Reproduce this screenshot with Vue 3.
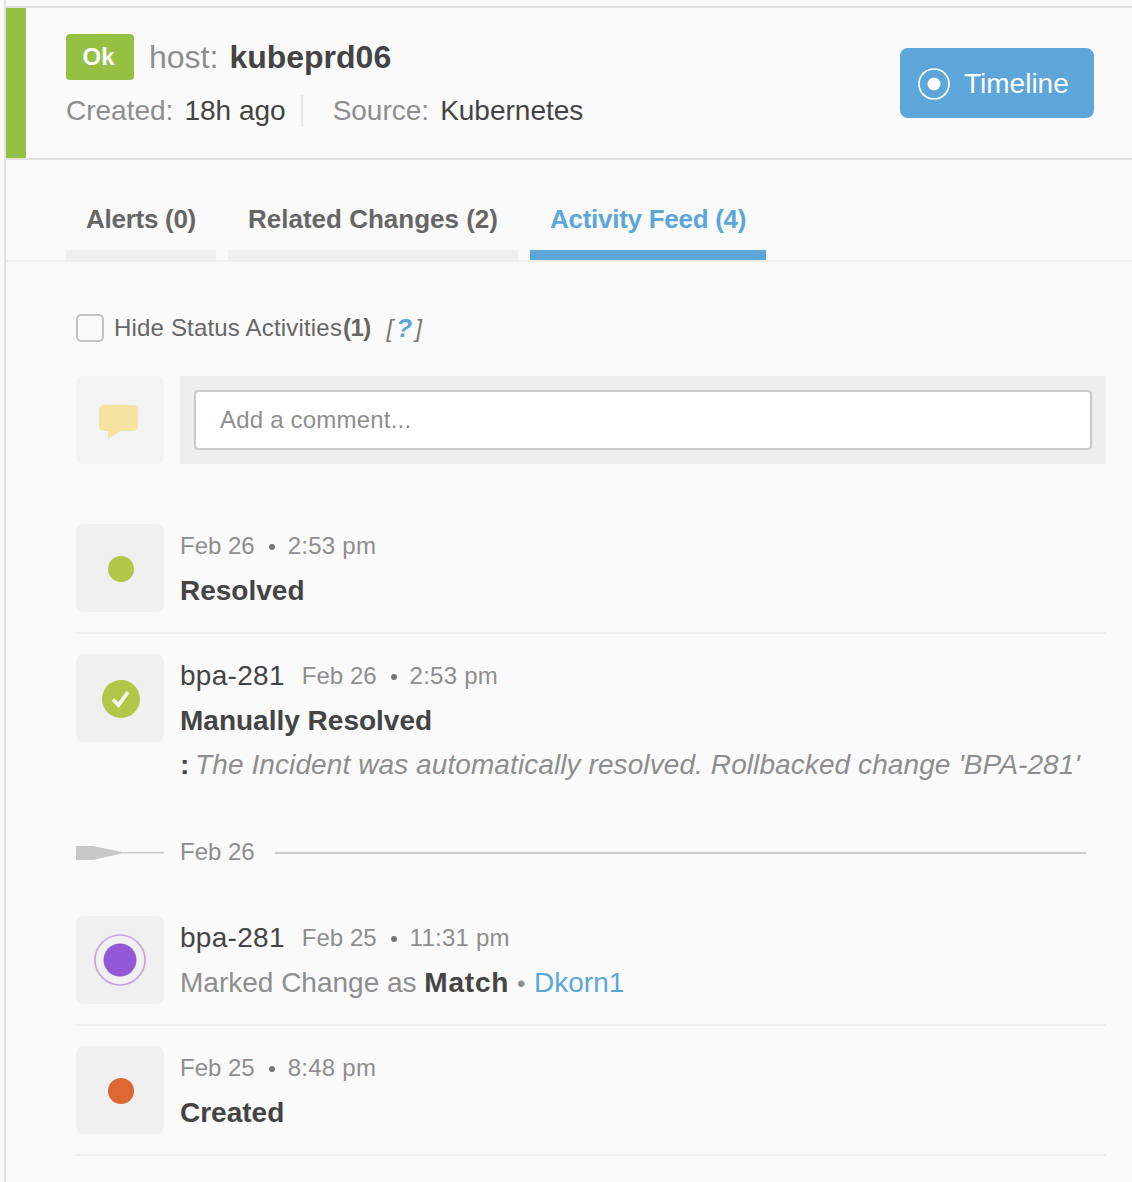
<script setup>
const tabs = [
  { label: 'Alerts (0)', active: false, cls: 'tight' },
  { label: 'Related Changes (2)', active: false, cls: '' },
  { label: 'Activity Feed (4)', active: true, cls: 'tight' }
]
</script>

<template>
  <div class="page">
    <header class="head">
      <div class="bar"></div>
      <div class="head-main">
        <div class="title-row">
          <span class="badge">Ok</span>
          <span class="host">host:</span>
          <strong class="hostname">kubeprd06</strong>
        </div>
        <div class="info-row">
          <span class="muted">Created:</span>
          <span class="val">18h ago</span>
          <span class="vsep"></span>
          <span class="muted">Source:</span>
          <span class="val">Kubernetes</span>
        </div>
      </div>
      <button class="timeline">
        <svg width="32" height="32" viewBox="0 0 32 32"><circle cx="16" cy="16" r="15" fill="none" stroke="#fff" stroke-width="1.7"/><circle cx="16" cy="16" r="6.5" fill="#fff"/></svg>
        <span>Timeline</span>
      </button>
    </header>

    <nav class="tabs">
      <div v-for="t in tabs" :key="t.label" class="tab" :class="[t.cls, { active: t.active }]">{{ t.label }}</div>
    </nav>

    <main class="feed">
      <label class="hide">
        <span class="check"></span>
        <span class="hide-text">Hide Status Activities</span><b class="count">(1)</b>
        <span class="help">[<b>?</b>]</span>
      </label>

      <div class="comment">
        <div class="ibox">
          <svg width="88" height="88" viewBox="0 0 88 88"><path d="M28 29h29a5 5 0 0 1 5 5v16a5 5 0 0 1-5 5H45L32 63V55H28a5 5 0 0 1-5-5V34a5 5 0 0 1 5-5z" fill="#f6e3a1"/></svg>
        </div>
        <div class="comment-area">
          <div class="input">Add a comment...</div>
        </div>
      </div>

      <section class="row first">
        <div class="ibox">
          <svg width="88" height="88" viewBox="0 0 88 88"><circle cx="45" cy="45" r="13" fill="#b2c647"/></svg>
        </div>
        <div class="body">
          <div class="meta"><span>Feb 26</span><i class="dot"></i><span class="time">2:53 pm</span></div>
          <div class="strong">Resolved</div>
        </div>
      </section>

      <section class="row last">
        <div class="ibox">
          <svg width="88" height="88" viewBox="0 0 88 88"><circle cx="45" cy="45" r="19" fill="#b2c647"/><path d="M37 45.5l5.5 5.5 9.5-13" fill="none" stroke="#f4f4f4" stroke-width="3.8"/></svg>
        </div>
        <div class="body">
          <div class="meta"><span class="user">bpa-281</span><span>Feb 26</span><i class="dot"></i><span class="time">2:53 pm</span></div>
          <div class="strong">Manually Resolved</div>
          <div class="note"><b>:</b> <em>The Incident was automatically resolved. Rollbacked change 'BPA-281'</em></div>
        </div>
      </section>

      <div class="date-sep">
        <svg width="88" height="18" viewBox="0 0 88 18"><path d="M0 2h17L46 8H88V9.5H46L17 16H0z" fill="#c8c8c8"/></svg>
        <span class="date-text">Feb 26</span>
        <div class="date-line"></div>
      </div>

      <section class="row">
        <div class="ibox">
          <svg width="88" height="88" viewBox="0 0 88 88"><circle cx="44" cy="44" r="25" fill="none" stroke="#c3a3ea" stroke-width="1.6"/><circle cx="44" cy="44" r="16.5" fill="#9159d8"/></svg>
        </div>
        <div class="body">
          <div class="meta"><span class="user">bpa-281</span><span>Feb 25</span><i class="dot"></i><span class="time">11:31 pm</span></div>
          <div class="line"><span class="soft">Marked Change as </span><b class="match">Match</b><span class="soft bullet"> • </span><a class="link">Dkorn1</a></div>
        </div>
      </section>

      <section class="row">
        <div class="ibox">
          <svg width="88" height="88" viewBox="0 0 88 88"><circle cx="45" cy="45" r="13" fill="#dd6633"/></svg>
        </div>
        <div class="body">
          <div class="meta"><span>Feb 25</span><i class="dot"></i><span class="time">8:48 pm</span></div>
          <div class="strong">Created</div>
        </div>
      </section>
    </main>
  </div>
</template>

<style>
html, body { margin: 0; background: #fafafa; }
</style>

<style scoped>
.page {
  box-sizing: border-box;
  width: 1128px;
  height: 1182px;
  margin-left: 4px;
  padding-top: 6px;
  border-left: 2px solid #e2e2e2;
  overflow: hidden;
  font-family: "Liberation Sans", Arial, sans-serif;
  color: #444;
  background: #fafafa;
}
.head {
  display: flex;
  height: 154px;
  box-sizing: border-box;
  border-top: 2px solid #e2e2e2;
  border-bottom: 2px solid #e2e2e2;
}
.bar { width: 20px; background: #94c143; }
.head-main { margin-left: 40px; padding-top: 26px; flex: 1; }
.title-row { display: flex; align-items: center; height: 46px; }
.badge {
  box-sizing: border-box;
  width: 68px;
  height: 46px;
  padding-right: 3px;
  line-height: 46px;
  text-align: center;
  background: #94c143;
  color: #fff;
  font-size: 24px;
  font-weight: 700;
  border-radius: 4px;
}
.host { margin-left: 15px; font-size: 32px; color: #8e8e8e; }
.hostname { margin-left: 11px; font-size: 32px; color: #444; }
.info-row { display: flex; align-items: center; margin-top: 8px; height: 46px; font-size: 28px; }
.muted { color: #8e8e8e; }
.val { margin-left: 11px; color: #444; }
.vsep { width: 2px; height: 32px; background: #e6e6e6; margin: 0 30px 0 15px; }
.timeline {
  display: flex;
  align-items: center;
  gap: 14px;
  box-sizing: border-box;
  width: 194px;
  height: 70px;
  margin: 40px 38px 0 0;
  padding: 2px 0 0 18px;
  border: 0;
  border-radius: 8px;
  background: #5ca6d9;
  color: #fff;
  font: 28px "Liberation Sans", Arial, sans-serif;
}
.tabs {
  display: flex;
  gap: 12px;
  height: 102px;
  box-sizing: border-box;
  padding-left: 60px;
  border-bottom: 2px solid #eee;
}
.tab {
  box-sizing: border-box;
  height: 100px;
  padding: 41px 20px 0;
  font-size: 26px;
  line-height: 36px;
  font-weight: 700;
  color: #666;
  border-bottom: 10px solid #f0f0f0;
}
.tab.tight { letter-spacing: -0.27px; }
.tab.active { color: #5ca6d9; border-bottom-color: #5ca6d9; }
.feed { padding: 52px 26px 0 70px; }
.hide { display: flex; align-items: center; height: 28px; font-size: 24px; color: #666; }
.hide-text { letter-spacing: 0.18px; }
.check {
  box-sizing: border-box;
  width: 28px;
  height: 28px;
  margin-right: 10px;
  border: 2px solid #c4c4c4;
  border-radius: 5px;
}
.count { color: #666; margin-left: 1px; letter-spacing: -0.6px; }
.help { margin-left: 16px; font-style: italic; color: #777; }
.help b { color: #5ca6d9; font-size: 26px; margin: 0 3px; }
.comment { display: flex; gap: 16px; margin-top: 34px; margin-bottom: 60px; }
.ibox {
  flex: none;
  width: 88px;
  height: 88px;
  background: #f0f0f0;
  border-radius: 8px;
}
.ibox svg { display: block; }
.comment .ibox { background: #f3f3f3; }
.comment-area { flex: 1; box-sizing: border-box; height: 88px; padding: 14px; background: #eee; }
.input {
  box-sizing: border-box;
  height: 60px;
  padding-left: 24px;
  line-height: 56px;
  background: #fff;
  border: 2px solid #c8c8c8;
  border-radius: 4px;
  font-size: 24px;
  letter-spacing: 0.2px;
  color: #8e8e8e;
}
.row {
  display: flex;
  gap: 16px;
  padding-bottom: 20px;
  margin-bottom: 20px;
  border-bottom: 2px solid #eee;
}
.row.last { border-bottom: 0; padding-bottom: 0; margin-bottom: 0; }
.body { min-width: 0; }
.meta { display: flex; align-items: center; height: 44px; font-size: 24px; color: #8e8e8e; }
.user { font-size: 28px; color: #444; margin-right: 17px; letter-spacing: 0.3px; }
.dot { width: 6px; height: 6px; margin: 2px 13px 0 14px; border-radius: 50%; background: #777; }
.time { letter-spacing: 0.25px; }
.strong { height: 44px; line-height: 46px; font-size: 28px; font-weight: 700; color: #444; }
.note { height: 44px; line-height: 46px; font-size: 28px; white-space: nowrap; }
.note em { color: #8e8e8e; margin-left: -2px; letter-spacing: 0.09px; }
.date-sep {
  display: flex;
  align-items: center;
  height: 32px;
  margin: 51px 20px 47px 0;
  font-size: 24px;
  color: #8e8e8e;
}
.date-sep svg { flex: none; margin-right: 16px; }
.date-text { padding-bottom: 2px; }
.date-line { flex: 1; height: 2px; margin-left: 20px; background: #ccc; }
.line { height: 44px; line-height: 46px; font-size: 28px; color: #444; white-space: pre; }
.soft { color: #8e8e8e; }
.match { letter-spacing: 0.8px; }
.bullet { font-size: 24px; letter-spacing: 1px; }
.link { color: #5ca6d9; }
</style>
